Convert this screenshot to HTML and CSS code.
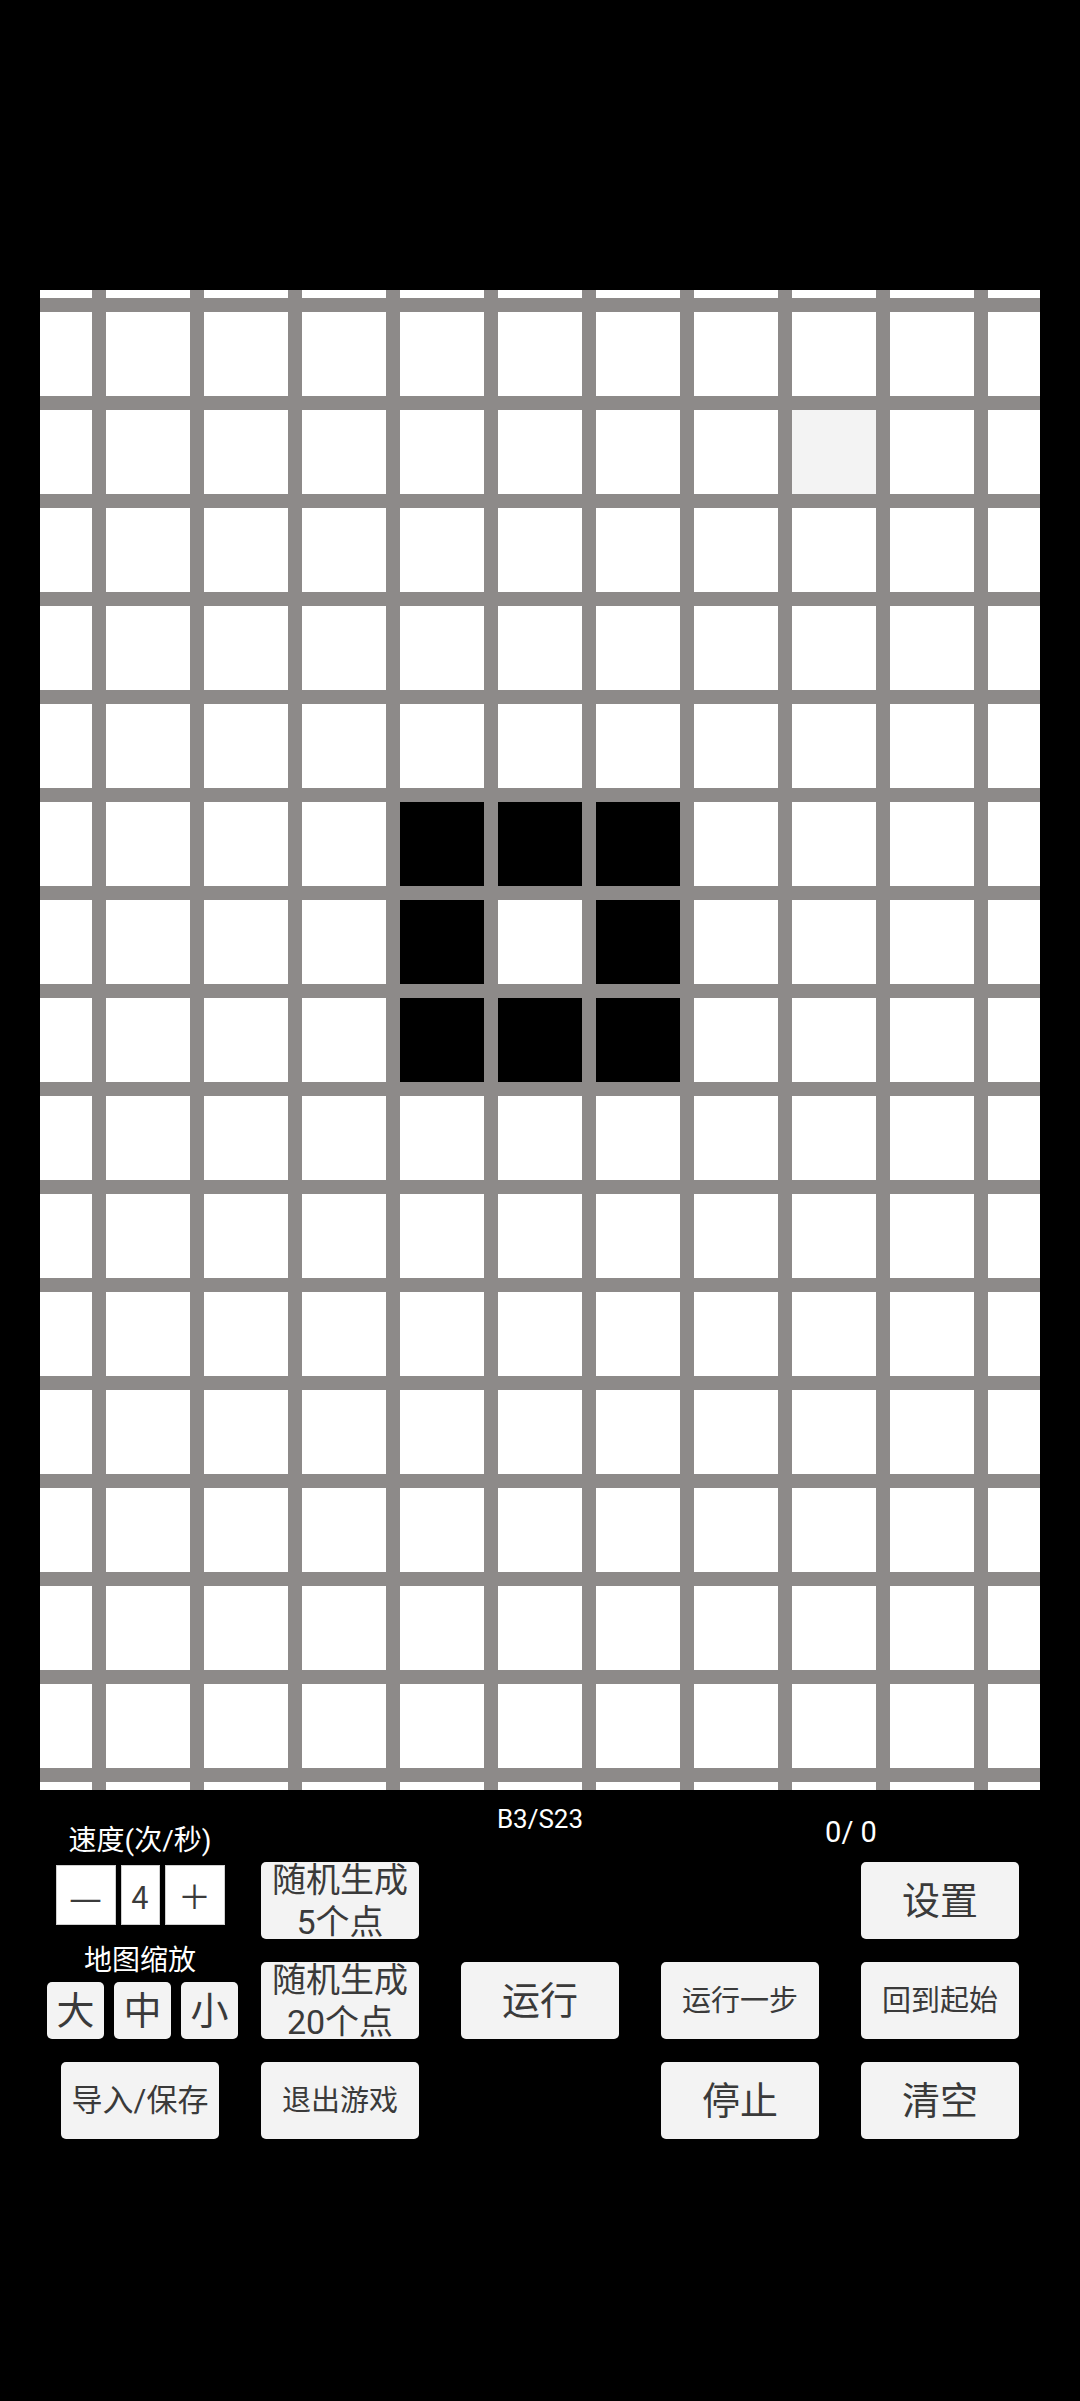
FILE: index.html
```html
<!DOCTYPE html>
<html lang="zh-CN">
<head>
<meta charset="utf-8">
<title>生命游戏</title>
<link rel="stylesheet" href="styles.css">
</head>
<body>
<div class="screen">
  <div class="board">
    <div class="cell ghost r3 c9"></div>
    <div class="cell alive r7 c5"></div>
    <div class="cell alive r7 c6"></div>
    <div class="cell alive r7 c7"></div>
    <div class="cell alive r8 c5"></div>
    <div class="cell alive r8 c7"></div>
    <div class="cell alive r9 c5"></div>
    <div class="cell alive r9 c6"></div>
    <div class="cell alive r9 c7"></div>
  </div>

  <div class="controls">
    <div class="left">
      <div class="label speed-label">速度(次/秒)</div>
      <div class="speed">
        <div class="sbox wide dash">—</div>
        <div class="sbox num">4</div>
        <div class="sbox wide plus">＋</div>
      </div>
      <div class="label zoom-label">地图缩放</div>
      <div class="zoom">
        <div class="btn zbtn">大</div>
        <div class="btn zbtn">中</div>
        <div class="btn zbtn">小</div>
      </div>
    </div>

    <div class="rule">B3/S23</div>
    <div class="count">0/ 0</div>

    <div class="btn two-line g-r2c2">随机生成<br>5个点</div>
    <div class="btn big g-r2c5">设置</div>

    <div class="btn two-line g-r3c2">随机生成<br>20个点</div>
    <div class="btn big g-r3c3">运行</div>
    <div class="btn small g-r3c4">运行一步</div>
    <div class="btn small g-r3c5">回到起始</div>

    <div class="btn mid g-r4c1">导入/保存</div>
    <div class="btn small g-r4c2">退出游戏</div>
    <div class="btn big g-r4c4">停止</div>
    <div class="btn big g-r4c5">清空</div>
  </div>
</div>
</body>
</html>
```

FILE: styles.css
```css
html, body {
  margin: 0;
  padding: 0;
  background: #000;
}

body {
  font-family: Roboto, "Noto Sans CJK SC", sans-serif;
  color: #fff;
}

.screen {
  width: 1080px;
  height: 2401px;
  padding-top: 290px;
  box-sizing: border-box;
  overflow: hidden;
}

/* ---------- board ---------- */
.board {
  margin-left: 40px;
  width: 1000px;
  height: 1500px;
  overflow: hidden;
  background-color: #fff;
  background-image:
    linear-gradient(90deg, #8d8a89 14px, transparent 14px),
    linear-gradient(180deg, #8d8a89 14px, transparent 14px);
  background-size: 98px 100%, 100% 98px;
  background-position: 52px 0, 0 8px;
  display: grid;
  grid-template-columns: 52px repeat(9, 84px) 52px;
  grid-template-rows: 8px repeat(15, 84px) 8px;
  gap: 14px;
}

.cell.alive { background: #000; }
.cell.ghost { background: #f3f3f3; }

.r3 { grid-row: 3; }
.r7 { grid-row: 7; }
.r8 { grid-row: 8; }
.r9 { grid-row: 9; }
.c5 { grid-column: 5; }
.c6 { grid-column: 6; }
.c7 { grid-column: 7; }
.c9 { grid-column: 9; }

/* ---------- controls ---------- */
.controls {
  display: grid;
  grid-template-columns: repeat(5, 158px);
  column-gap: 42px;
  grid-template-rows: 49px 77px 77px 77px;
  row-gap: 23px;
  padding-left: 61px;
}

.left {
  grid-column: 1;
  grid-row: 1 / 4;
  display: flex;
  flex-direction: column;
  align-items: center;
}

.label {
  font-size: 28px;
  line-height: 34px;
  color: #fff;
  white-space: nowrap;
}

.speed-label { margin-top: 34px; }
.zoom-label { margin-top: 19px; }

.speed {
  margin-top: 7px;
  display: flex;
  gap: 5px;
}

.sbox {
  height: 60px;
  background: #fff;
  box-sizing: border-box;
  border: 1px solid #cfcfcf;
  color: #3b3b3b;
  display: flex;
  align-items: center;
  justify-content: center;
  font-family: "Noto Sans CJK SC", Roboto, sans-serif;
  font-size: 32px;
  line-height: 1;
}

.sbox.wide { width: 60px; }
.sbox.dash { font-size: 37px; }
.sbox.num { width: 39px; font-size: 31px; }
.sbox.plus { font-size: 33px; }

.zoom {
  margin-top: 4px;
  margin-left: 5px;
  display: flex;
  gap: 10px;
}

.btn {
  background: #f3f3f3;
  border-radius: 5px;
  color: #3a3a3a;
  display: flex;
  align-items: center;
  justify-content: center;
  text-align: center;
  white-space: nowrap;
}

.zbtn {
  width: 57px;
  height: 57px;
  font-size: 38px;
  line-height: 40px;
}

.big { font-size: 38px; line-height: 44px; }
.small { font-size: 29px; line-height: 36px; }
.mid { font-size: 31px; line-height: 36px; }
.two-line { font-size: 34px; line-height: 42px; }

.rule {
  grid-column: 3;
  grid-row: 1;
  margin-top: 14px;
  font-size: 26px;
  line-height: 30px;
  text-align: center;
  align-self: start;
}

.count {
  grid-column: 4 / 6;
  grid-row: 1;
  margin-top: 25px;
  padding-left: 22px;
  font-size: 29px;
  line-height: 34px;
  text-align: center;
  align-self: start;
}

.g-r2c2 { grid-row: 2; grid-column: 2; }
.g-r2c5 { grid-row: 2; grid-column: 5; }
.g-r3c2 { grid-row: 3; grid-column: 2; }
.g-r3c3 { grid-row: 3; grid-column: 3; }
.g-r3c4 { grid-row: 3; grid-column: 4; }
.g-r3c5 { grid-row: 3; grid-column: 5; }
.g-r4c1 { grid-row: 4; grid-column: 1; }
.g-r4c2 { grid-row: 4; grid-column: 2; }
.g-r4c4 { grid-row: 4; grid-column: 4; }
.g-r4c5 { grid-row: 4; grid-column: 5; }
```
